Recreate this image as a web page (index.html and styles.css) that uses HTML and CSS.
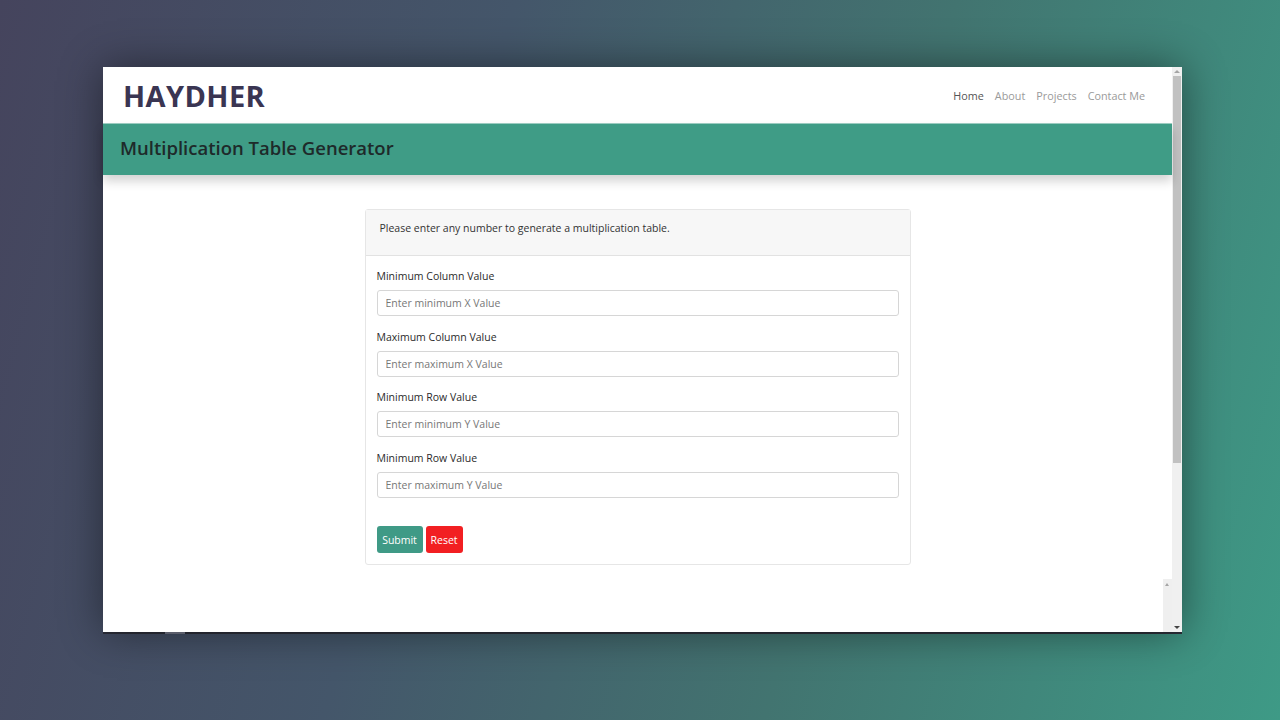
FILE: index.html
```html
<!DOCTYPE html>
<html>
<head>
<meta charset="utf-8">
<link rel="stylesheet" href="styles.css">
</head>
<body>
<div class="desktop">
  <div class="window">
    <div class="page">
      <nav class="navbar">
        <div class="brand">HAYDHER</div>
        <ul class="nav">
          <li class="active">Home</li>
          <li>About</li>
          <li>Projects</li>
          <li>Contact Me</li>
        </ul>
      </nav>
      <header class="banner">
        <h1>Multiplication Table Generator</h1>
      </header>
      <main class="main">
        <div class="card">
          <div class="card-header">Please enter any number to generate a multiplication table.</div>
          <form class="card-body">
            <div class="group">
              <label>Minimum Column Value</label>
              <input type="text" placeholder="Enter minimum X Value">
            </div>
            <div class="group">
              <label>Maximum Column Value</label>
              <input type="text" placeholder="Enter maximum X Value">
            </div>
            <div class="group">
              <label>Minimum Row Value</label>
              <input type="text" placeholder="Enter minimum Y Value">
            </div>
            <div class="group">
              <label>Minimum Row Value</label>
              <input type="text" placeholder="Enter maximum Y Value">
            </div>
            <div class="actions">
              <button type="button" class="btn btn-submit">Submit</button>
              <button type="button" class="btn btn-reset">Reset</button>
            </div>
          </form>
        </div>
        <div class="inner-scroll">
          <span class="arrow-up"></span>
        </div>
      </main>
    </div>
    <div class="scrollbar">
      <span class="arrow-up"></span>
      <div class="thumb"></div>
      <span class="arrow-down"></span>
    </div>
  </div>
  <div class="tab-stub"></div>
</div>
</body>
</html>
```
FILE: styles.css
```css
* { box-sizing: border-box; }
html, body { margin: 0; height: 100%; }
body {
  font-family: "Open Sans", "Noto Sans", sans-serif;
  background: linear-gradient(105deg, #45445d 0%, #44566a 35%, #427470 65%, #3e9a86 100%);
  overflow: hidden;
}
.desktop {
  padding: 67px 0 0 103px;
  height: 720px;
}
.window {
  width: 1079px;
  height: 565px;
  background: #fff;
  display: flex;
  box-shadow: 0 0 40px rgba(0, 0, 0, 0.45), 0 2px 0 #2d2f3a;
}
.page {
  flex: 1;
  display: flex;
  flex-direction: column;
  min-width: 0;
}
.navbar {
  height: 57px;
  display: flex;
  align-items: center;
  justify-content: space-between;
  padding: 0 27px 0 20px;
  border-bottom: 1px solid #9fd0c4;
}
.brand {
  font-family: "Open Sans", sans-serif;
  font-weight: 700;
  font-size: 29px;
  letter-spacing: 0.4px;
  color: #3a3552;
  padding-top: 0;
}
.nav {
  list-style: none;
  margin: 0;
  padding: 0;
  display: flex;
  gap: 11px;
  font-size: 10.8px;
  color: #9a9a9a;
}
.nav li.active { color: #555; }
.banner {
  height: 51px;
  background: #3f9c86;
  display: flex;
  align-items: center;
  padding: 0 0 5px 17px;
  box-shadow: 0 6px 10px rgba(0, 0, 0, 0.18);
  position: relative;
  z-index: 1;
}
.banner h1 {
  margin: 0;
  font-size: 18.5px;
  font-weight: 600;
  color: #1e2a2a;
}
.main {
  flex: 1;
  position: relative;
  padding-top: 34px;
  display: flex;
  justify-content: center;
  align-items: flex-start;
}
.card {
  width: 546px;
  border: 1px solid #e6e6e6;
  border-radius: 3px;
  font-size: 10.5px;
  color: #333;
}
.card-header {
  height: 46px;
  background: #f7f7f7;
  border-bottom: 1px solid #e2e2e2;
  padding: 11px 14px;
  line-height: 14px;
}
.card-body {
  padding: 12px 11px 11px;
  margin: 0;
}
.group {
  display: flex;
  flex-direction: column;
  margin-bottom: 12.5px;
}
.group label {
  line-height: 16px;
  margin-bottom: 6px;
  color: #2b2b2b;
}
.group input {
  height: 26px;
  border: 1px solid #d6d6d6;
  border-radius: 3px;
  padding: 0 8px;
  font-family: inherit;
  font-size: 10.5px;
  color: #333;
}
.group input::placeholder { color: #777; }
.actions {
  display: flex;
  gap: 3px;
  padding-top: 16px;
}
.btn {
  height: 27px;
  border: none;
  border-radius: 3px;
  color: #fff;
  font-family: inherit;
  font-size: 10.5px;
  padding: 0 5px;
}
.btn-submit { background: #3f9a86; width: 46px; }
.btn-reset { background: #f21f22; width: 37px; }
.inner-scroll {
  position: absolute;
  right: 0;
  bottom: 0;
  width: 9px;
  height: 53px;
  background: #efefef;
}
.inner-scroll .arrow-up {
  position: absolute;
  top: 4px;
  left: 2px;
  border: 2.5px solid transparent;
  border-bottom: 3px solid #a5a5a5;
  border-top: none;
}
.scrollbar {
  width: 10px;
  background: #f0f0f0;
  display: flex;
  flex-direction: column;
  align-items: center;
}
.scrollbar .arrow-up {
  margin-top: 3px;
  border: 3px solid transparent;
  border-bottom: 3px solid #a5a5a5;
  border-top: none;
}
.scrollbar .thumb {
  margin-top: 3px;
  width: 8px;
  height: 387px;
  background: #c1c1c1;
}
.scrollbar .arrow-down {
  margin-top: auto;
  margin-bottom: 3px;
  border: 3px solid transparent;
  border-top: 3px solid #444;
  border-bottom: none;
}
.tab-stub {
  width: 20px;
  height: 2px;
  margin-left: 62px;
  background: #5a5d6a;
}
```
